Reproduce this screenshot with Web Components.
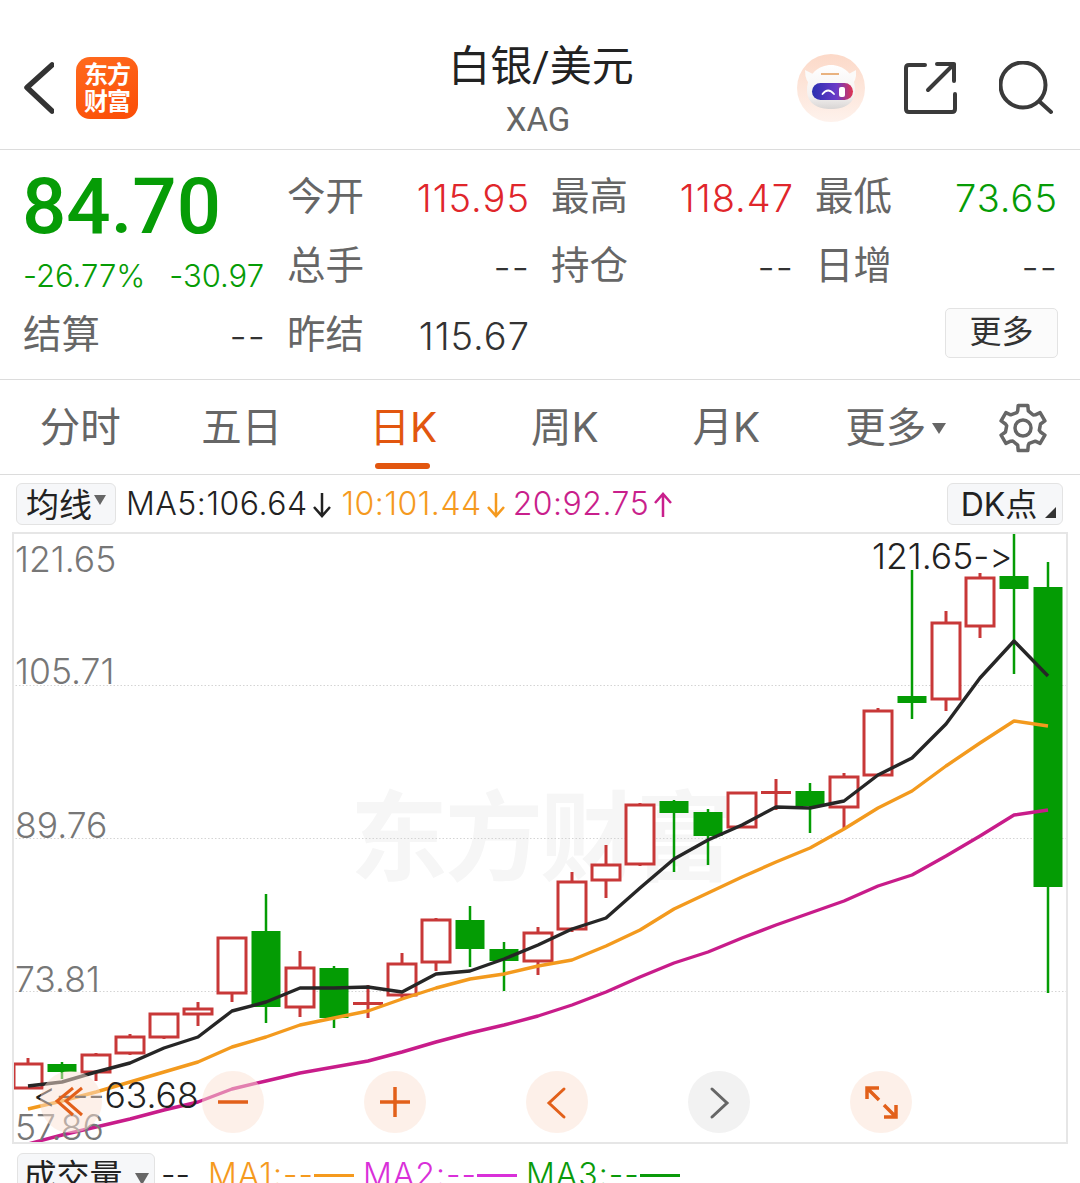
<!DOCTYPE html>
<html lang="zh">
<head>
<meta charset="utf-8">
<title>白银/美元</title>
<style>
  html, body { margin: 0; padding: 0; background: #fff; }
  body {
    width: 1080px;
    height: 1183px;
    overflow: hidden;
    font-family: Inter, "Noto Sans CJK SC", sans-serif;
    font-variant-ligatures: none;
    font-feature-settings: "calt" 0, "liga" 0;
    color: #222;
  }
</style>
</head>
<body>
<em-header></em-header>
<em-quote></em-quote>
<em-tabs></em-tabs>
<ma-bar></ma-bar>
<k-chart></k-chart>
<vol-bar></vol-bar>

<script>
class EmHeader extends HTMLElement {
  connectedCallback() {
    this.attachShadow({ mode: 'open' });
    this.shadowRoot.innerHTML = `
      <style>
        :host {
          display: grid;
          grid-template-columns: 1fr auto 1fr;
          height: 149px;
          border-bottom: 1px solid #dcdcdc;
          box-sizing: content-box;
          font-family: Roboto, "Noto Sans CJK SC", sans-serif;
        }
        .side {
          display: flex;
          align-items: center;
          height: 68px;
          margin-top: 54px;
        }
        .left { padding-left: 22px; }
        .right { justify-content: flex-end; padding-right: 27px; }
        .logo {
          width: 62px;
          height: 62px;
          margin-left: 22px;
          box-sizing: border-box;
          padding-bottom: 4px;
          border-radius: 14px;
          background: linear-gradient(160deg, #ff6a1e, #fb4d06);
          color: #fff;
          font-size: 24px;
          font-weight: 700;
          line-height: 27px;
          letter-spacing: -1px;
          text-align: center;
          display: flex;
          align-items: center;
          justify-content: center;
          font-family: "Noto Sans CJK SC", sans-serif;
        }
        .title { text-align: center; padding-top: 39px; margin-left: 2px; }
        .name { font-size: 42px; line-height: 56px; color: #222; }
        .code { font-size: 33px; line-height: 50px; color: #666; margin-left: -6px; }
        svg { display: block; flex: none; }
        .share { margin-left: 38px; }
        .search { margin-left: 42px; }
      </style>
      <div class="side left">
        <svg width="32" height="52" viewBox="0 0 32 52" fill="none" stroke="#333" stroke-width="5.500" stroke-linecap="round" stroke-linejoin="round"><path d="M30 3 L5 25.500 L30 49"/></svg>
        <div class="logo"><span>东方<br>财富</span></div>
      </div>
      <div class="title">
        <div class="name">白银/美元</div>
        <div class="code">XAG</div>
      </div>
      <div class="side right">
        <svg width="68" height="68" viewBox="0 0 68 68">
          <defs>
            <linearGradient id="bg" x1="0" y1="0" x2="0" y2="1"><stop offset="0" stop-color="#fcd9c8"/><stop offset="1" stop-color="#fef2ec"/></linearGradient>
            <linearGradient id="visor" x1="0" y1="0" x2="1" y2="0"><stop offset="0" stop-color="#2a2fb0"/><stop offset=".6" stop-color="#6a3ac8"/><stop offset="1" stop-color="#e0344f"/></linearGradient>
            <linearGradient id="head" x1="0" y1="0" x2="0" y2="1"><stop offset="0" stop-color="#fff"/><stop offset=".7" stop-color="#f4f1f0"/><stop offset="1" stop-color="#d8d5d4"/></linearGradient>
          </defs>
          <circle cx="34" cy="34" r="34" fill="url(#bg)"/>
          <path d="M8 16 Q8 28 15 32 L20 22 Z M59 16 Q60 28 53 32 L48 22 Z" fill="#fbfaf9"/>
          <path d="M10 36 C10 20 22 11 34 11 C46 11 58 20 58 36 C58 50 47 55 34 55 C21 55 10 50 10 36 Z" fill="url(#head)"/>
          <path d="M24 20 H42" stroke="#e9b27f" stroke-width="2" fill="none"/>
          <rect x="15" y="29" width="41" height="17" rx="8.500" fill="url(#visor)"/>
          <path d="M25.500 40 Q31 33 37 40" stroke="#fff" stroke-width="1.800" fill="none" stroke-linecap="round"/>
          <rect x="42" y="33" width="6" height="10" rx="2" fill="#fff"/>
        </svg>
        <svg class="share" width="54" height="54" viewBox="0 0 54 54" fill="none" stroke="#3a3a3a" stroke-width="4" stroke-linecap="round" stroke-linejoin="round">
          <path d="M22 4 H6 Q3 4 3 7 V48 Q3 51 6 51 H49 Q52 51 52 48 V33"/>
          <path d="M25 29 L51 3 M34 3 H51 V20"/>
        </svg>
        <svg class="search" width="54" height="54" viewBox="0 0 54 54" fill="none" stroke="#3a3a3a" stroke-width="4" stroke-linecap="round">
          <circle cx="24" cy="24" r="22.500"/>
          <path d="M41 41 L52 51"/>
        </svg>
      </div>
    `;
  }
}

class QuoteCell extends HTMLElement {
  connectedCallback() {
    this.attachShadow({ mode: 'open' });
    this.shadowRoot.innerHTML = `
      <style>
        :host {
          display: flex;
          justify-content: space-between;
          align-items: center;
          font-size: 38px;
          font-weight: 300;
          color: #333;
        }
        :host([tone="up"]) .val { color: #e0262b; }
        :host([tone="down"]) .val { color: #069c06; }
        .val { margin-right: -2px; letter-spacing: 1px; }
        .label { color: #666; font-size: 38.500px; font-weight: 400; line-height: 44px; margin: -3px 0 0 -1px; }
      </style>
      <span class="label"><slot name="label"></slot></span>
      <span class="val"><slot></slot></span>
    `;
  }
}

class EmQuote extends HTMLElement {
  connectedCallback() {
    this.attachShadow({ mode: 'open' });
    this.shadowRoot.innerHTML = `
      <style>
        :host {
          display: block;
          height: 229px;
          border-bottom: 1px solid #dcdcdc;
          box-sizing: content-box;
        }
        .grid {
          display: grid;
          grid-template-columns: repeat(4, 240px);
          grid-auto-rows: 69px;
          column-gap: 24px;
          padding: 13px 0 0 24px;
        }
        .price {
          grid-column: 1;
          grid-row: 1 / span 2;
          color: #069c06;
        }
        .big {
          font-family: Roboto, sans-serif;
          font-size: 78px;
          font-weight: 500;
          line-height: 88px;
          margin-left: -2px;
        }
        .sub {
          display: flex;
          justify-content: space-between;
          font-size: 31px;
          font-weight: 300;
          line-height: 40px;
          margin: 5px 0 0 -1px;
        }
        .more {
          display: flex;
          justify-content: flex-end;
          align-items: center;
        }
        .more span {
          display: block;
          width: 111px;
          height: 48px;
          line-height: 46px;
          margin: -5px -2px 0 0;
          border: 1px solid #e3e3e3;
          border-radius: 5px;
          background: #fbfbfb;
          font-size: 32px;
          text-align: center;
          color: #333;
        }
      </style>
      <div class="grid">
        <div class="price">
          <div class="big">84.70</div>
          <div class="sub"><span>-26.77%</span><span>-30.97</span></div>
        </div>
        <quote-cell tone="up"><span slot="label">今开</span>115.95</quote-cell>
        <quote-cell tone="up"><span slot="label">最高</span>118.47</quote-cell>
        <quote-cell tone="down"><span slot="label">最低</span>73.65</quote-cell>
        <quote-cell style="grid-column:2"><span slot="label">总手</span>--</quote-cell>
        <quote-cell><span slot="label">持仓</span>--</quote-cell>
        <quote-cell><span slot="label">日增</span>--</quote-cell>
        <quote-cell><span slot="label">结算</span>--</quote-cell>
        <quote-cell><span slot="label">昨结</span>115.67</quote-cell>
        <div></div>
        <div class="more"><span>更多</span></div>
      </div>
    `;
  }
}

class EmTabs extends HTMLElement {
  connectedCallback() {
    this.attachShadow({ mode: 'open' });
    // gear outline, six teeth with one pointing up
    let d = '';
    for (let i = 0; i < 6; i++) {
      const a = i * 60 - 90;
      const pts = [[16.5, a - 30 + 8], [18, a - 17], [23, a - 12], [23, a + 12], [18, a + 17]];
      pts.forEach((p, j) => {
        const r = p[1] * Math.PI / 180;
        const x = 27 + p[0] * Math.cos(r);
        const y = 27 + p[0] * Math.sin(r);
        d += (i === 0 && j === 0 ? 'M' : 'L') + x.toFixed(1) + ' ' + y.toFixed(1) + ' ';
      });
    }
    this.shadowRoot.innerHTML = `
      <style>
        :host {
          display: grid;
          grid-template-columns: repeat(6, 161.500px) 1fr;
          height: 94px;
          border-bottom: 1px solid #dcdcdc;
          box-sizing: content-box;
        }
        .tab {
          position: relative;
          text-align: center;
          font-size: 40.500px;
          line-height: 96px;
          color: #666;
          margin-left: -1px;
        }
        .tab.more { padding-left: 16px; box-sizing: border-box; }
        .tab.active { color: #e2560f; }
        .tab.active::after {
          content: '';
          position: absolute;
          left: 50%;
          bottom: 7px;
          width: 55px;
          height: 6px;
          margin-left: -28px;
          border-radius: 3px;
          background: #e2560f;
        }
        .caret {
          display: inline-block;
          width: 0;
          height: 0;
          margin-left: 6px;
          vertical-align: 8px;
          border-left: 7px solid transparent;
          border-right: 7px solid transparent;
          border-top: 11px solid #666;
        }
        .gear { display: flex; align-items: center; justify-content: center; padding-right: 3px; }
        svg { display: block; }
      </style>
      <div class="tab">分时</div>
      <div class="tab">五日</div>
      <div class="tab active">日K</div>
      <div class="tab">周K</div>
      <div class="tab">月K</div>
      <div class="tab more">更多<span class="caret"></span></div>
      <div class="gear">
        <svg width="54" height="54" viewBox="0 0 54 54" fill="none" stroke="#666" stroke-width="3.500" stroke-linejoin="round">
          <path d="${d}Z"/>
          <circle cx="27" cy="27" r="8"/>
        </svg>
      </div>
    `;
  }
}

class SelectBtn extends HTMLElement {
  connectedCallback() {
    this.attachShadow({ mode: 'open' });
    this.shadowRoot.innerHTML = `
      <style>
        :host {
          display: inline-flex;
          align-items: center;
          justify-content: center;
          box-sizing: border-box;
          height: 42px;
          border: 1px solid #e3e3e3;
          border-radius: 6px;
          background: #f6f7f9;
          font-size: 32px;
          color: #222;
          flex: none;
        }
      </style>
      <slot></slot>
    `;
  }
}

class MaBar extends HTMLElement {
  connectedCallback() {
    this.attachShadow({ mode: 'open' });
    this.shadowRoot.innerHTML = `
      <style>
        :host {
          display: flex;
          align-items: center;
          height: 57px;
          padding: 0 17px 0 16px;
          font-size: 32px;
          font-weight: 300;
          box-sizing: border-box;
        }
        select-btn { font-weight: 400; }
        select-btn.ma { width: 100px; padding-bottom: 2px; font-size: 33px; }
        select-btn.dk { width: 116px; margin-left: auto; position: relative; padding: 0 12px 3px 0; box-sizing: border-box; }
        .down {
          display: inline-block;
          width: 0;
          height: 0;
          margin-left: 2px;
          margin-top: -6px;
          border-left: 6px solid transparent;
          border-right: 6px solid transparent;
          border-top: 10px solid #666;
        }
        .corner {
          position: absolute;
          right: 6px;
          bottom: 6px;
          width: 0;
          height: 0;
          border-left: 11px solid transparent;
          border-bottom: 11px solid #333;
        }
        .vals { display: flex; margin-left: 10px; white-space: nowrap; letter-spacing: .5px; }
        .vals span { margin-right: 9px; }
        .vals span.b { margin-right: 6px; }
        .a { color: #222; }
        .b { color: #f59a1e; }
        .c { color: #c91f8c; }
        svg { display: inline-block; vertical-align: -3px; margin-left: 3px; }
      </style>
      <select-btn class="ma">均线<i class="down"></i></select-btn>
      <div class="vals">
        <span class="a">MA5:106.64<svg width="22" height="26" viewBox="0 0 22 26" fill="none" stroke="currentColor" stroke-width="2.500"><path d="M11 1 V24 M3 15 L11 24 L19 15"/></svg></span>
        <span class="b">10:101.44<svg width="22" height="26" viewBox="0 0 22 26" fill="none" stroke="currentColor" stroke-width="2.500"><path d="M11 1 V24 M3 15 L11 24 L19 15"/></svg></span>
        <span class="c">20:92.75<svg width="22" height="26" viewBox="0 0 22 26" fill="none" stroke="currentColor" stroke-width="2.500"><path d="M11 25 V2 M3 11 L11 2 L19 11"/></svg></span>
      </div>
      <select-btn class="dk">DK点<i class="corner"></i></select-btn>
    `;
  }
}

// [x centre, body top, body bottom, wick top, wick bottom, 1 up / 0 down / 2 flat]
const CANDLES = [
  [28, 1064, 1088, 1058, 1088, 1], [62, 1064, 1072, 1062, 1079, 0], [96, 1055, 1072, 1053, 1081, 1],
  [130, 1037, 1053, 1034, 1055, 1], [164, 1014, 1037, 1014, 1039, 1], [198, 1009, 1014, 1002, 1026, 1],
  [232, 938, 993, 938, 1002, 1], [266, 931, 1007, 894, 1023, 0], [300, 968, 1007, 951, 1017, 1],
  [334, 968, 1018, 966, 1028, 0], [368, 1002, 1005, 985, 1018, 2], [402, 964, 995, 953, 1000, 1],
  [436, 920, 962, 918, 971, 1], [470, 920, 949, 906, 967, 0], [504, 949, 961, 942, 991, 0],
  [538, 933, 961, 927, 975, 1], [572, 882, 929, 872, 932, 1], [606, 865, 880, 845, 898, 1],
  [640, 805, 864, 803, 866, 1], [674, 801, 813, 800, 872, 0], [708, 812, 836, 809, 865, 0],
  [742, 793, 827, 792, 827, 1], [776, 791, 794, 779, 810, 2], [810, 791, 806, 783, 833, 0],
  [844, 777, 807, 773, 828, 1], [878, 711, 775, 708, 775, 1], [912, 696, 703, 570, 719, 0],
  [946, 623, 699, 611, 711, 1], [980, 578, 626, 573, 638, 1], [1014, 576, 589, 532, 674, 0],
  [1048, 587, 887, 562, 993, 0]
];
const MA5 = [1086, 1082, 1072, 1063, 1048, 1037, 1011, 1002, 988, 988, 987, 992, 974, 971, 959, 945, 929, 918, 888, 859, 840, 825, 807, 808, 801, 775, 758, 724, 678, 641, 676];
const MA10 = [1109, 1101, 1092, 1082, 1072, 1062, 1047, 1037, 1025, 1018, 1011, 999, 988, 979, 974, 966, 960, 946, 930, 909, 893, 877, 862, 848, 829, 808, 791, 766, 743, 721, 726];
const MA20 = [1144, 1135, 1127, 1119, 1110, 1102, 1089, 1081, 1073, 1067, 1061, 1052, 1042, 1033, 1025, 1016, 1005, 992, 977, 963, 952, 938, 925, 913, 901, 886, 875, 856, 836, 815, 810];

class KChart extends HTMLElement {
  connectedCallback() {
    this.attachShadow({ mode: 'open' });
    const RED = '#c83838', GREEN = '#049c04';
    let shapes = '';
    CANDLES.forEach(([x, t, b, wt, wb, up]) => {
      if (up === 0) {
        shapes += `<rect x="${x - 1.25}" y="${wt}" width="2.5" height="${wb - wt}" fill="${GREEN}"/>`;
        shapes += `<rect x="${x - 14.5}" y="${t}" width="29" height="${b - t}" fill="${GREEN}"/>`;
      } else if (up === 2) {
        shapes += `<rect x="${x - 1.5}" y="${wt}" width="3" height="${wb - wt}" fill="${RED}"/>`;
        shapes += `<rect x="${x - 15}" y="${t}" width="30" height="${b - t}" fill="${RED}"/>`;
      } else {
        shapes += `<path d="M${x} ${wt}V${t}M${x} ${b}V${wb}" stroke="${RED}" stroke-width="3"/>`;
        shapes += `<rect x="${x - 14}" y="${t}" width="28" height="${b - t}" fill="#fff" stroke="${RED}" stroke-width="3"/>`;
      }
    });
    const line = (ys, c) => `<polyline fill="none" stroke="${c}" stroke-width="3.400" stroke-linejoin="round" points="${ys.map((y, i) => (28 + i * 34) + ',' + y).join(' ')}"/>`;
    this.shadowRoot.innerHTML = `
      <style>
        :host {
          display: block;
          position: relative;
          box-sizing: border-box;
          width: 1056px;
          height: 612px;
          margin-left: 12px;
          border: 2px solid #e6e6e6;
          overflow: hidden;
        }
        svg { position: absolute; left: -2px; top: -2px; }
        .wm {
          position: absolute;
          left: 336px;
          top: 236px;
          font-size: 98px;
          line-height: 120px;
          font-weight: 700;
          letter-spacing: -3px;
          color: #f6f6f6;
          white-space: nowrap;
          font-family: "Noto Sans CJK SC", sans-serif;
        }
        .lab {
          position: absolute;
          left: 1px;
          font-size: 35.500px;
          font-weight: 300;
          line-height: 40px;
          color: #777;
        }
        .note {
          position: absolute;
          font-size: 35.500px;
          font-weight: 300;
          line-height: 40px;
          color: #222;
          white-space: nowrap;
        }
        .ctrls {
          position: absolute;
          left: 26px;
          top: 537px;
          display: flex;
          gap: 100px;
        }
        .ctrls div {
          width: 62px;
          height: 62px;
          border-radius: 50%;
          background: rgba(252, 226, 212, .5);
        }
        .ctrls div.off { background: #f2f2f2; }
        .ctrls svg { position: static; display: block; }
      </style>
      <span class="wm">东方财富</span>
      <svg width="1056" height="612" viewBox="12 532 1056 612">
        <g stroke="#d4d4d4" stroke-width="1" stroke-dasharray="1.500 2">
          <path d="M12 685.500H1068M12 838.500H1068M12 991.500H1068"/>
        </g>
        ${shapes}
        ${line(MA20, '#c81c8a')}
        ${line(MA10, '#f39a1e')}
        ${line(MA5, '#262626')}
      </svg>
      <span class="lab" style="top:6px">121.65</span>
      <span class="lab" style="top:118px">105.71</span>
      <span class="lab" style="top:272px">89.76</span>
      <span class="lab" style="top:426px">73.81</span>
      <span class="lab" style="top:574px">57.86</span>
      <span class="note" style="left:858px;top:3px">121.65-&gt;</span>
      <span class="note" style="left:19px;top:542px">&lt;---63.68</span>
      <div class="ctrls">
        <div><svg width="62" height="62" fill="none" stroke="#e2601a" stroke-width="3"><path d="M33 17 L17 30 L33 44 M42 17 L26 30 L42 44"/></svg></div>
        <div><svg width="62" height="62" fill="none" stroke="#e2601a" stroke-width="3.500"><path d="M16 31H46"/></svg></div>
        <div><svg width="62" height="62" fill="none" stroke="#e2601a" stroke-width="3.500"><path d="M16 31H46M31 16V46"/></svg></div>
        <div><svg width="62" height="62" fill="none" stroke="#e2601a" stroke-width="3" stroke-linecap="round"><path d="M38 18 L23 32 L38 46"/></svg></div>
        <div class="off"><svg width="62" height="62" fill="none" stroke="#666" stroke-width="3" stroke-linecap="round"><path d="M24 18 L39 32 L24 46"/></svg></div>
        <div><svg width="62" height="62" fill="none" stroke="#e2601a" stroke-width="3.500"><path d="M17 28V17H29M17 17L29 29M46 34V46H34M46 46L34 34"/></svg></div>
      </div>
    `;
  }
}

class VolBar extends HTMLElement {
  connectedCallback() {
    this.attachShadow({ mode: 'open' });
    this.shadowRoot.innerHTML = `
      <style>
        :host {
          display: flex;
          align-items: flex-start;
          padding: 9px 0 0 17px;
          height: 30px;
          overflow: hidden;
          font-size: 32px;
          font-weight: 300;
          line-height: 42px;
          white-space: nowrap;
        }
        select-btn { width: 138px; height: 60px; padding-bottom: 14px; box-sizing: border-box; font-size: 33px; font-weight: 400; }
        .down {
          display: inline-block;
          width: 0;
          height: 0;
          margin-left: 12px;
          margin-top: 6px;
          border-left: 7px solid transparent;
          border-right: 7px solid transparent;
          border-top: 12px solid #666;
        }
        .dash { margin-left: 6px; margin-top: 1px; width: 47px; color: #222; }
        .ma { display: flex; align-items: center; margin-top: 1px; margin-right: 9px; letter-spacing: 1px; }
        .ma i { display: block; width: 40px; height: 3px; background: currentColor; }
        .m1 { color: #f59a1e; }
        .m2 { color: #d930d9; }
        .m3 { color: #0a9a0a; }
      </style>
      <select-btn>成交量<i class="down"></i></select-btn>
      <span class="dash">--</span>
      <span class="ma m1">MA1:--<i></i></span>
      <span class="ma m2">MA2:--<i></i></span>
      <span class="ma m3">MA3:--<i></i></span>
    `;
  }
}

customElements.define('select-btn', SelectBtn);
customElements.define('quote-cell', QuoteCell);
customElements.define('em-header', EmHeader);
customElements.define('em-quote', EmQuote);
customElements.define('em-tabs', EmTabs);
customElements.define('ma-bar', MaBar);
customElements.define('k-chart', KChart);
customElements.define('vol-bar', VolBar);
</script>
</body>
</html>
